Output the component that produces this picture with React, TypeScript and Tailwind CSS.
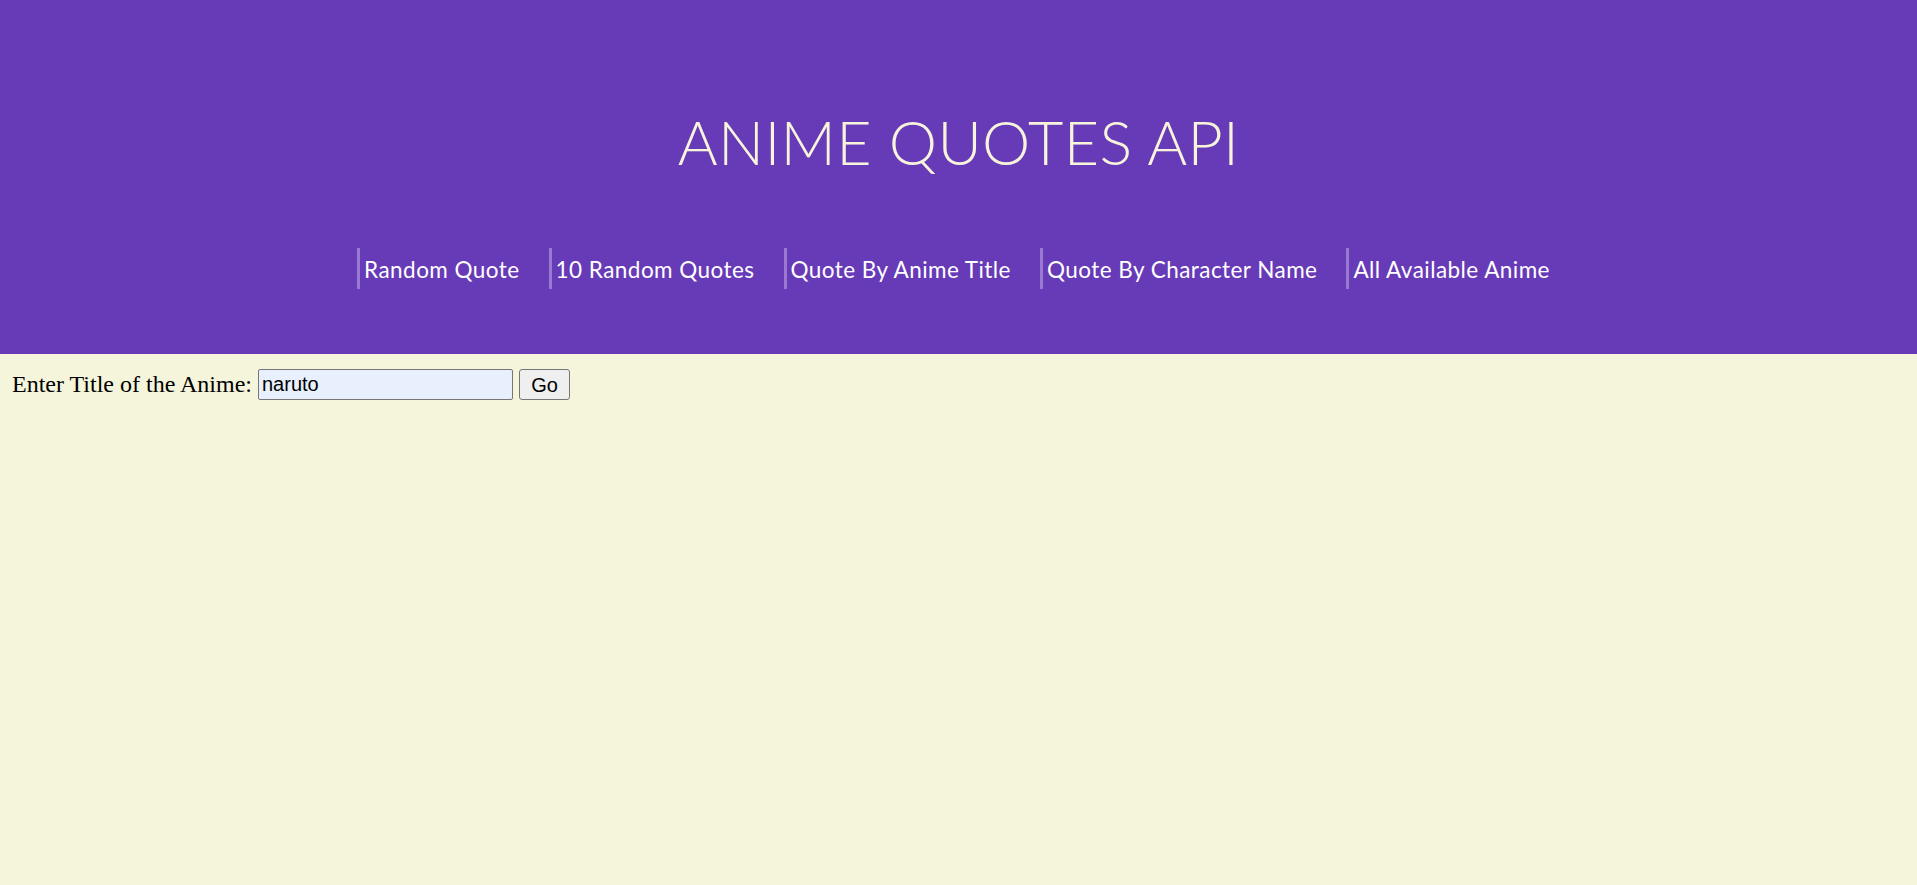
export default function App() {
  const items = [
    "Random Quote",
    "10 Random Quotes",
    "Quote By Anime Title",
    "Quote By Character Name",
    "All Available Anime",
  ];
  return (
    <div className="min-h-[885px] bg-[#f5f5dc]">
      <header className="h-[354px] bg-[#673ab7] flex flex-col items-center">
        <h1 className="mt-[105px] text-[61px] leading-[74px] tracking-[0.3px] font-light text-[#f8f4dc] font-['Lato',sans-serif]">
          ANIME QUOTES API
        </h1>
        <nav className="mt-[69px] flex pr-[10px]">
          {items.map((t) => (
            <div
              key={t}
              className="border-l-[3px] border-[#9a7ad0] pl-[4px] pt-[3px] mr-[29px] last:mr-0 h-[41px] flex items-center text-[22.5px] tracking-[0.45px] text-white font-['Lato',sans-serif]"
            >
              {t}
            </div>
          ))}
        </nav>
      </header>
      <div className="flex items-center pl-[12px] pt-[12px] font-['Liberation_Serif',serif] text-[24px] text-black">
        <span>Enter Title of the Anime:</span>
        <input
          defaultValue="naruto"
          className="ml-[6px] w-[255px] h-[31px] border-[1.5px] border-[#767676] bg-[#e8f0fe] px-[3px] text-[20px] font-['Liberation_Sans',sans-serif] rounded-[2px] outline-none"
        />
        <button className="ml-[6px] w-[51px] h-[31px] border-[1.5px] border-[#767676] bg-[#efefef] rounded-[3px] text-[20px] font-['Liberation_Sans',sans-serif]">
          Go
        </button>
      </div>
    </div>
  );
}
